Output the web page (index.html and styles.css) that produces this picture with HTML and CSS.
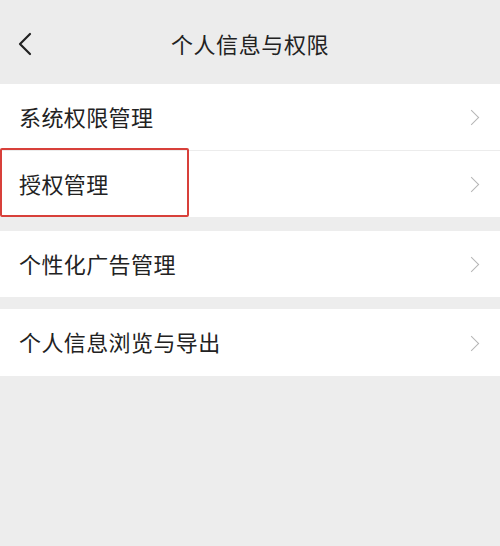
FILE: index.html
```html
<!DOCTYPE html>
<html lang="zh-CN">
<head>
    <meta charset="UTF-8">
    <meta name="viewport" content="width=device-width, initial-scale=1.0">
    <title>个人信息与权限</title>
    <link rel="stylesheet" href="styles.css">
</head>
<body>
    <!-- 顶部导航 -->
    <div class="nav-bar">
        <span class="back">
            <svg width="14" height="24" viewBox="0 0 14 24">
                <path d="M12 2 L2 12 L12 22" fill="none" stroke="#222" stroke-width="2.2" stroke-linecap="round" stroke-linejoin="round"/>
            </svg>
        </span>
        <h1 class="nav-title">个人信息与权限</h1>
    </div>

    <div class="group">
        <div class="cell">
            <span class="cell-text">系统权限管理</span>
            <span class="arrow"></span>
        </div>
        <div class="cell cell-marked">
            <span class="cell-text">授权管理</span>
            <span class="arrow"></span>
            <span class="mark"></span>
        </div>
    </div>

    <div class="group group-ad">
        <div class="cell">
            <span class="cell-text">个性化广告管理</span>
            <span class="arrow"></span>
        </div>
    </div>

    <div class="group group-export">
        <div class="cell cell-last">
            <span class="cell-text">个人信息浏览与导出</span>
            <span class="arrow"></span>
        </div>
    </div>
</body>
</html>
```

FILE: styles.css
```css
body {
    margin: 0;
    background-color: #ededed;
    font-family: "Noto Sans CJK SC", "Noto Sans", sans-serif;
    color: #222;
    height: 546px;
    overflow: hidden;
}

.nav-bar {
    height: 84px;
    display: flex;
    align-items: center;
    justify-content: center;
    position: relative;
    background-color: #ececec;
}

.back {
    position: absolute;
    left: 18px;
    top: 32px;
    display: flex;
}

.nav-title {
    margin: 0;
    font-size: 22px;
    font-weight: 400;
    letter-spacing: 0.6px;
    padding-top: 2px;
}

.group {
    background-color: #fff;
}

.group-ad {
    margin-top: 14px;
}

.group-export {
    margin-top: 12px;
}

.cell {
    height: 66px;
    display: flex;
    align-items: center;
    justify-content: space-between;
    padding: 0 23px 0 19px;
    position: relative;
}

.cell + .cell {
    border-top: 1px solid #ececec;
}

.cell-last {
    height: 67px;
}

.cell-text {
    font-size: 22px;
    letter-spacing: 0.4px;
    padding-bottom: 3px;
}

.arrow {
    width: 10px;
    height: 10px;
    border-top: 1.5px solid #b5b5b5;
    border-right: 1.5px solid #b5b5b5;
    transform: rotate(45deg);
    margin-top: 1px;
}

/* 红框标注 */
.mark {
    position: absolute;
    left: 0;
    top: -3px;
    width: 185px;
    height: 65px;
    border: 2px solid #d8403a;
    border-radius: 2px;
}
```
